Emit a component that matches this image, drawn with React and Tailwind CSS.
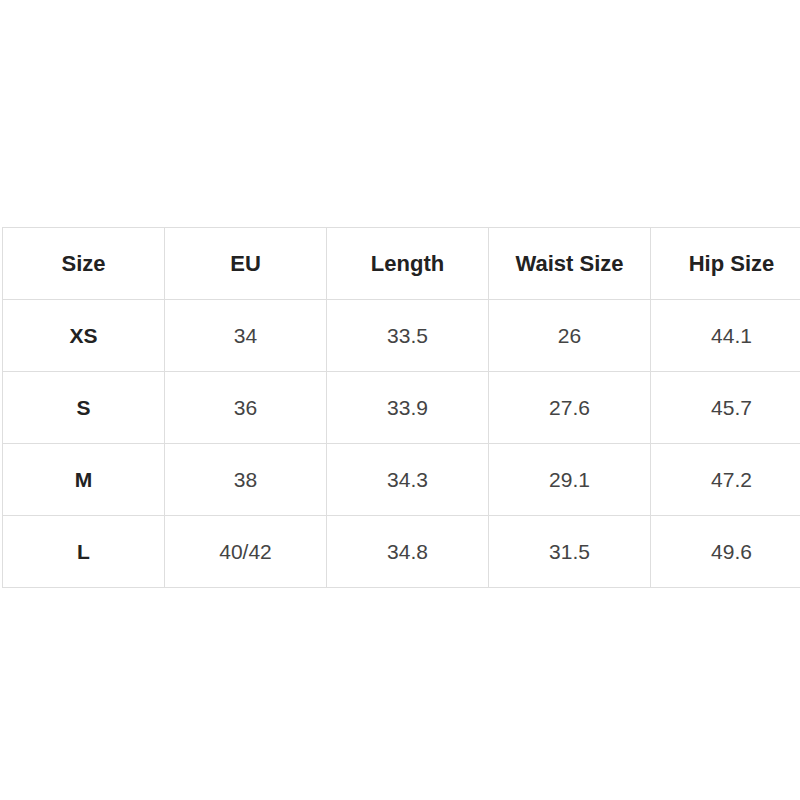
const HEAD = ["Size", "EU", "Length", "Waist Size", "Hip Size"];
const ROWS = [
  ["XS", "34", "33.5", "26", "44.1"],
  ["S", "36", "33.9", "27.6", "45.7"],
  ["M", "38", "34.3", "29.1", "47.2"],
  ["L", "40/42", "34.8", "31.5", "49.6"],
];

const CELL = "flex items-center justify-center border-r border-b border-[#dedede] h-[72px]";

export default function App() {
  return (
    <div className="w-[800px] h-[800px] overflow-hidden bg-white pt-[227px] pl-[2px]" style={{ fontFamily: '"Liberation Sans", Arial, sans-serif' }}>
      <div className="grid grid-cols-[repeat(5,162px)] w-[811px] border-t border-l border-[#dedede]">
        {HEAD.map((h) => (
          <div key={h} className={`${CELL} text-[22px] font-bold text-[#222]`}>{h}</div>
        ))}
        {ROWS.map((r) =>
          r.map((c, i) => (
            <div
              key={r[0] + i}
              className={`${CELL} text-[21px] ${i === 0 ? "font-bold text-[#222]" : "text-[#444]"}`}
            >
              {c}
            </div>
          ))
        )}
      </div>
    </div>
  );
}
